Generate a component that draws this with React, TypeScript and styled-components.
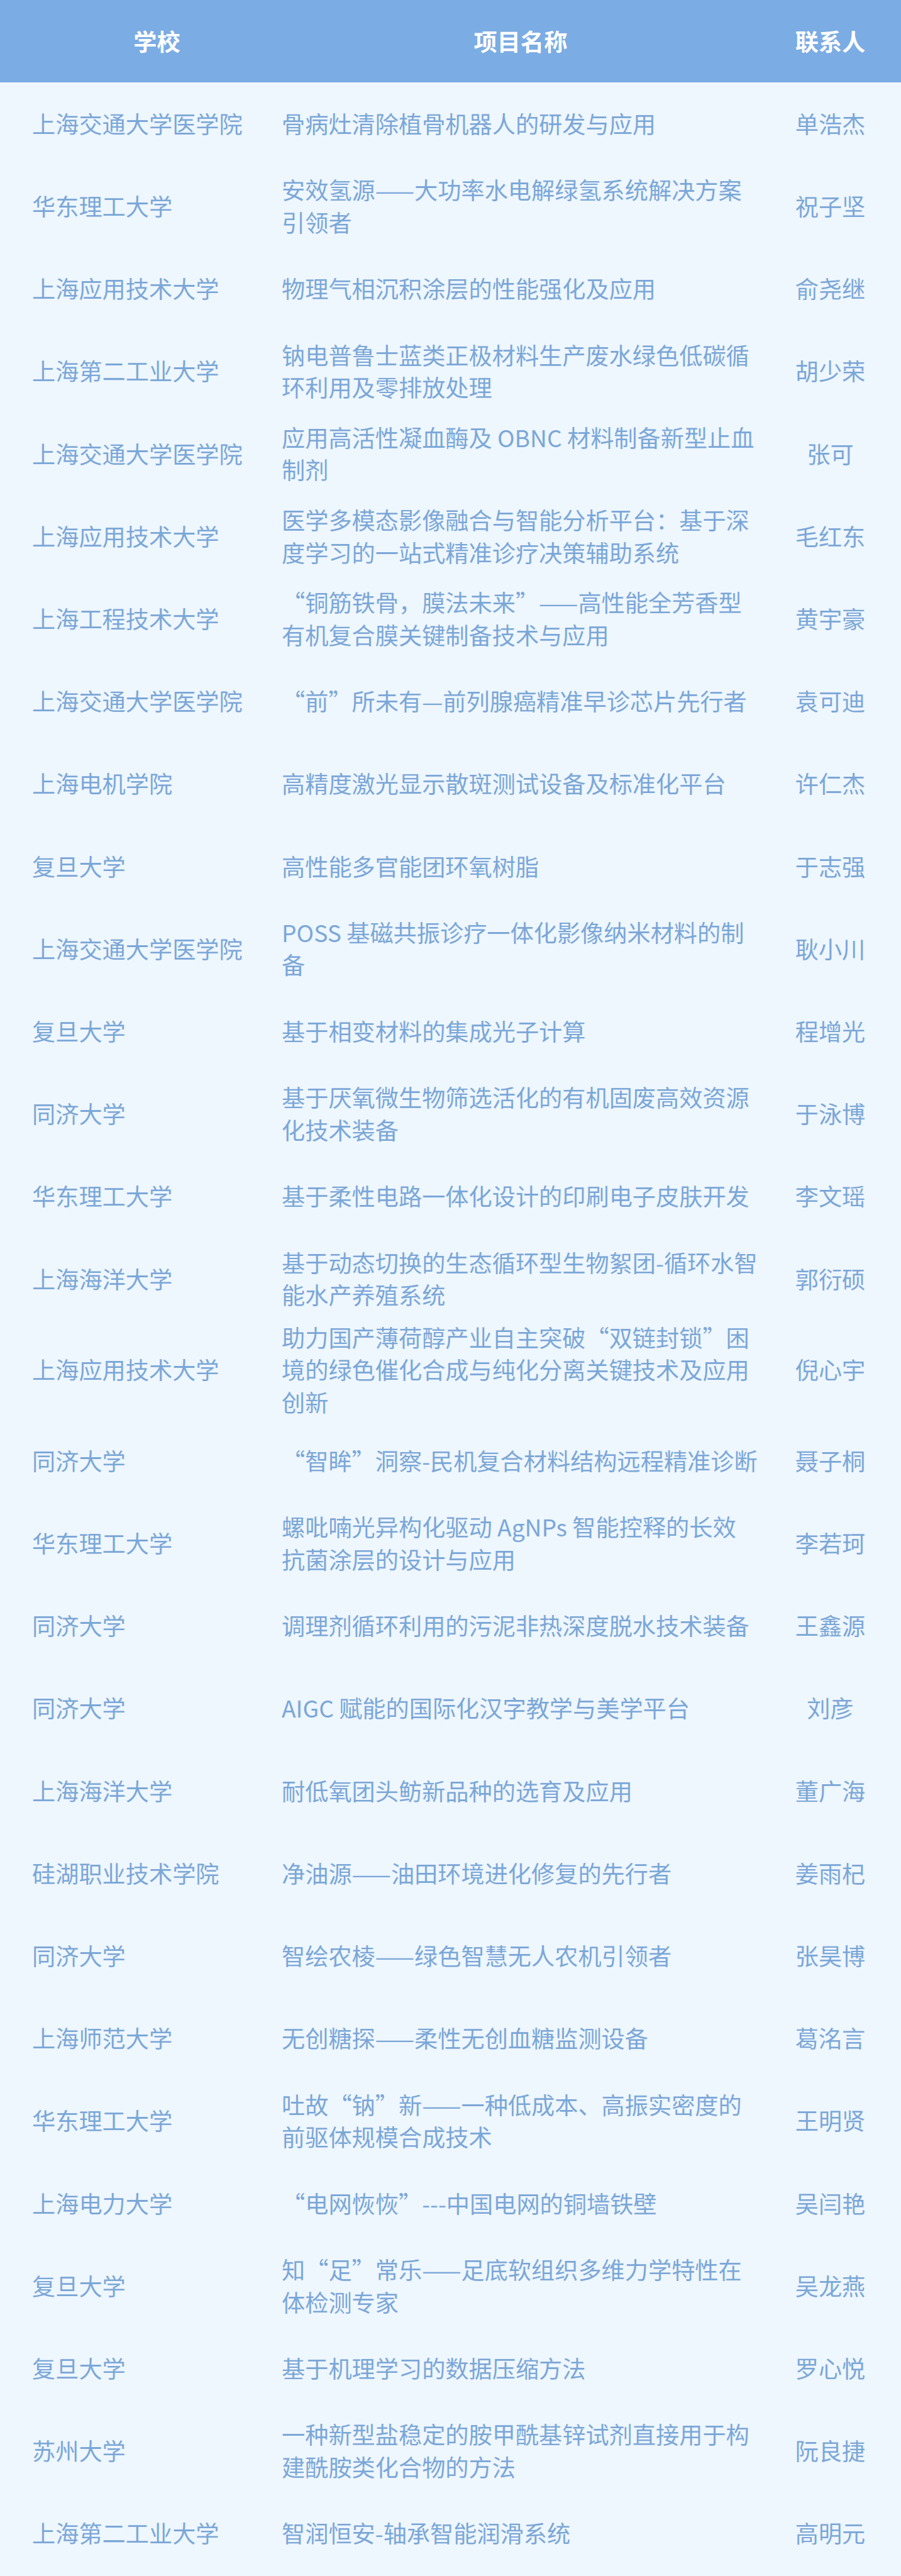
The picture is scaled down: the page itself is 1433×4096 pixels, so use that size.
import React from 'react'
import styled, { createGlobalStyle } from 'styled-components'

interface Project {
  school: string
  title: string[]
  contact: string
}

const projects: Project[] = [
  { school: '上海交通大学医学院', title: ['骨病灶清除植骨机器人的研发与应用'], contact: '单浩杰' },
  { school: '华东理工大学', title: ['安效氢源——大功率水电解绿氢系统解决方案', '引领者'], contact: '祝子坚' },
  { school: '上海应用技术大学', title: ['物理气相沉积涂层的性能强化及应用'], contact: '俞尧继' },
  { school: '上海第二工业大学', title: ['钠电普鲁士蓝类正极材料生产废水绿色低碳循', '环利用及零排放处理'], contact: '胡少荣' },
  { school: '上海交通大学医学院', title: ['应用高活性凝血酶及 OBNC 材料制备新型止血', '制剂'], contact: '张可' },
  { school: '上海应用技术大学', title: ['医学多模态影像融合与智能分析平台：基于深', '度学习的一站式精准诊疗决策辅助系统'], contact: '毛红东' },
  { school: '上海工程技术大学', title: ['“铜筋铁骨，膜法未来”——高性能全芳香型', '有机复合膜关键制备技术与应用'], contact: '黄宇豪' },
  { school: '上海交通大学医学院', title: ['“前”所未有—前列腺癌精准早诊芯片先行者'], contact: '袁可迪' },
  { school: '上海电机学院', title: ['高精度激光显示散斑测试设备及标准化平台'], contact: '许仁杰' },
  { school: '复旦大学', title: ['高性能多官能团环氧树脂'], contact: '于志强' },
  { school: '上海交通大学医学院', title: ['POSS 基磁共振诊疗一体化影像纳米材料的制', '备'], contact: '耿小川' },
  { school: '复旦大学', title: ['基于相变材料的集成光子计算'], contact: '程增光' },
  { school: '同济大学', title: ['基于厌氧微生物筛选活化的有机固废高效资源', '化技术装备'], contact: '于泳博' },
  { school: '华东理工大学', title: ['基于柔性电路一体化设计的印刷电子皮肤开发'], contact: '李文瑶' },
  { school: '上海海洋大学', title: ['基于动态切换的生态循环型生物絮团-循环水智', '能水产养殖系统'], contact: '郭衍硕' },
  {
    school: '上海应用技术大学',
    title: ['助力国产薄荷醇产业自主突破“双链封锁”困', '境的绿色催化合成与纯化分离关键技术及应用', '创新'],
    contact: '倪心宇',
  },
  { school: '同济大学', title: ['“智眸”洞察-民机复合材料结构远程精准诊断'], contact: '聂子桐' },
  { school: '华东理工大学', title: ['螺吡喃光异构化驱动 AgNPs 智能控释的长效', '抗菌涂层的设计与应用'], contact: '李若珂' },
  { school: '同济大学', title: ['调理剂循环利用的污泥非热深度脱水技术装备'], contact: '王鑫源' },
  { school: '同济大学', title: ['AIGC 赋能的国际化汉字教学与美学平台'], contact: '刘彦' },
  { school: '上海海洋大学', title: ['耐低氧团头鲂新品种的选育及应用'], contact: '董广海' },
  { school: '硅湖职业技术学院', title: ['净油源——油田环境进化修复的先行者'], contact: '姜雨杞' },
  { school: '同济大学', title: ['智绘农棱——绿色智慧无人农机引领者'], contact: '张昊博' },
  { school: '上海师范大学', title: ['无创糖探——柔性无创血糖监测设备'], contact: '葛洺言' },
  { school: '华东理工大学', title: ['吐故“钠”新——一种低成本、高振实密度的', '前驱体规模合成技术'], contact: '王明贤' },
  { school: '上海电力大学', title: ['“电网恢恢”---中国电网的铜墙铁壁'], contact: '吴闫艳' },
  { school: '复旦大学', title: ['知“足”常乐——足底软组织多维力学特性在', '体检测专家'], contact: '吴龙燕' },
  { school: '复旦大学', title: ['基于机理学习的数据压缩方法'], contact: '罗心悦' },
  { school: '苏州大学', title: ['一种新型盐稳定的胺甲酰基锌试剂直接用于构', '建酰胺类化合物的方法'], contact: '阮良捷' },
  { school: '上海第二工业大学', title: ['智润恒安-轴承智能润滑系统'], contact: '高明元' },
]

export default function App() {
  return (
    <>
      <GlobalStyle />
      <Table>
        <HeaderRow>
          <HeadCell $pad>学校</HeadCell>
          <HeadCell>项目名称</HeadCell>
          <HeadCell>联系人</HeadCell>
        </HeaderRow>
        {projects.map((p, i) => (
          <Row key={i}>
            <SchoolCell>{p.school}</SchoolCell>
            <TitleCell>
              {p.title.map((line, j) => (
                <Line key={j}>{line}</Line>
              ))}
            </TitleCell>
            <ContactCell>{p.contact}</ContactCell>
          </Row>
        ))}
      </Table>
    </>
  )
}

const GlobalStyle = createGlobalStyle`
  html, body {
    margin: 0;
    padding: 0;
    background: #eef6fe;
  }
  body {
    font-family: "Noto Sans CJK SC", "Noto Sans", sans-serif;
  }
`

const Table = styled.div`
  width: 1433px;
  background: #eef6fe;
  color: #7ba7d7;
  font-size: 37.2px;
`

const HeaderRow = styled.div`
  display: grid;
  grid-template-columns: 448px 760px 225px;
  height: 131px;
  background: #7bace3;
  color: #ffffff;
  font-weight: 700;
`

const HeadCell = styled.div<{ $pad?: boolean }>`
  display: flex;
  align-items: center;
  justify-content: center;
  padding-left: ${(p) => (p.$pad ? '51px' : '0')};
  line-height: 1;
`

const Row = styled.div`
  display: grid;
  grid-template-columns: 448px 760px 225px;
  min-height: 131.2px;
  box-sizing: border-box;
  padding: 2px 0;
  line-height: 51.4px;
`

const SchoolCell = styled.div`
  display: flex;
  align-items: center;
  padding-left: 51px;
  white-space: nowrap;
`

const TitleCell = styled.div`
  display: flex;
  flex-direction: column;
  justify-content: center;
`

const Line = styled.span`
  display: block;
  white-space: nowrap;
`

const ContactCell = styled.div`
  display: flex;
  align-items: center;
  justify-content: center;
  white-space: nowrap;
`
